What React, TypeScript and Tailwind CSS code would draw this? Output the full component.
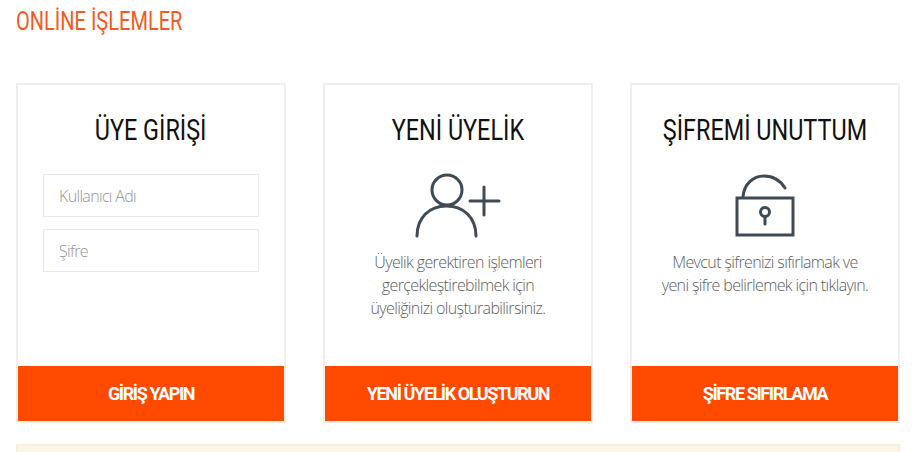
import React from 'react';

const Card: React.FC<{ title: string; action: string; children: React.ReactNode }> = ({ title, action, children }) => (
  <div className="w-[270px] h-[340px] border-2 border-[#efefef] flex flex-col bg-white">
    <h3 className="mt-[26px] h-[38px] text-center text-[30px] leading-[38px] text-[#111] font-['Roboto',sans-serif] font-normal whitespace-nowrap">
      <span className="inline-block scale-x-[0.78]">{title}</span>
    </h3>
    <div className="flex-1 min-h-0">{children}</div>
    <button className="h-[55px] shrink-0 bg-[#ff4a00] text-white text-[18px] font-bold font-['Roboto',sans-serif] tracking-[-1.4px] whitespace-nowrap">
      {action}
    </button>
  </div>
);

const Copy: React.FC<{ lines: string[] }> = ({ lines }) => (
  <p className="text-center text-[16px] leading-[23px] text-[#5d5d5d] font-['Open_Sans',sans-serif] font-light tracking-[-0.62px] whitespace-nowrap">
    {lines.map((l) => (
      <span key={l} className="block">{l}</span>
    ))}
  </p>
);

const Field: React.FC<{ label: string }> = ({ label }) => (
  <div className="h-[43px] w-[216px] border border-[#e8e8e8] flex items-center pl-[15px] pt-px text-[16px] text-[#949494] font-['Open_Sans',sans-serif] font-light tracking-[-0.66px]">
    {label}
  </div>
);

export default function App() {
  return (
    <div className="w-[922px] h-[452px] overflow-hidden bg-white">
      <div className="pl-4 pt-[6px] pr-[22px]">
        <h2 className="h-[30px] text-[26px] leading-[30px] text-[#f15a22] font-['Roboto',sans-serif] font-normal whitespace-nowrap">
          <span className="inline-block origin-left scale-x-[0.77]">ONLİNE İŞLEMLER</span>
        </h2>

        <div className="mt-[47px] flex gap-[37px]">
          <Card title="ÜYE GİRİŞİ" action="GİRİŞ YAPIN">
            <div className="pt-[25px] pl-[25px] flex flex-col gap-[12px]">
              <Field label="Kullanıcı Adı" />
              <Field label="Şifre" />
            </div>
          </Card>

          <Card title="YENİ ÜYELİK" action="YENİ ÜYELİK OLUŞTURUN">
            <div className="flex justify-center pt-[24px] pl-[2px] h-[100px]">
              <svg width="92" height="66" viewBox="0 0 92 66" fill="none" stroke="#3e4a54" strokeWidth="3" strokeLinecap="round">
                <circle cx="34" cy="17" r="15" />
                <path d="M4 63C4 45 16 33 33.5 33C51 33 63 45 63 63" />
                <path d="M57 28H86M71 14V42" />
              </svg>
            </div>
            <div className="mt-[2px]">
              <Copy lines={['Üyelik gerektiren işlemleri', 'gerçekleştirebilmek için', 'üyeliğinizi oluşturabilirsiniz.']} />
            </div>
          </Card>

          <Card title="ŞİFREMİ UNUTTUM" action="ŞİFRE SIFIRLAMA">
            <div className="flex justify-center pt-[24px] h-[100px]">
              <svg width="60" height="65" viewBox="0 0 60 65" fill="none" stroke="#3e4a54" strokeWidth="3" strokeLinecap="round">
                <path d="M8 24C9 11 18 3 29 3C38 3 45 7 50 15" />
                <rect x="2" y="25" width="56" height="37" />
                <circle cx="30" cy="39" r="4.5" />
                <path d="M30 44V51" />
              </svg>
            </div>
            <div className="mt-[2px]">
              <Copy lines={['Mevcut şifrenizi sıfırlamak ve', 'yeni şifre belirlemek için tıklayın.']} />
            </div>
          </Card>
        </div>

        <div className="mt-[21px] h-[40px] w-[884px] bg-[#fcf6e6] border-2 border-[#f9eeda]" />
      </div>
    </div>
  );
}
